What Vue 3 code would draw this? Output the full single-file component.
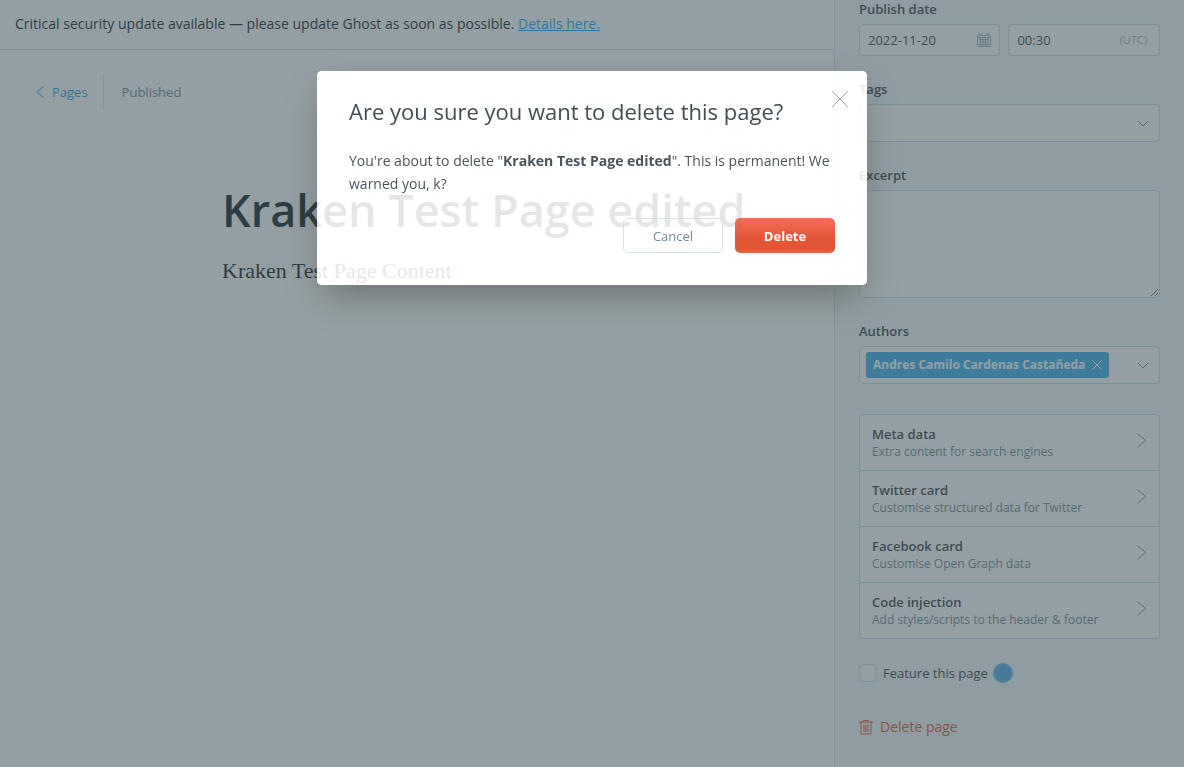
<script setup>
import { ref } from 'vue'

const publishDate = ref('2022-11-20')
const publishTime = ref('00:30')
const excerpt = ref('')
const featured = ref(false)
const sections = [
  { title: 'Meta data', text: 'Extra content for search engines' },
  { title: 'Twitter card', text: 'Customise structured data for Twitter' },
  { title: 'Facebook card', text: 'Customise Open Graph data' },
  { title: 'Code injection', text: 'Add styles/scripts to the header & footer' }
]
</script>

<template>
  <div class="app">
    <main class="editor">
      <div class="alert">
        Critical security update available — please update Ghost as soon as possible.
        <a href="#">Details here.</a>
      </div>
      <header class="bar">
        <a href="#" class="back">
          <svg width="8" height="12" viewBox="0 0 8 12"><path d="M7.5.5 1 6l6.5 5.500" /></svg>
          Pages
        </a>
        <span class="status">Published</span>
      </header>
      <article class="post">
        <h1>Kraken Test Page edited</h1>
        <p>Kraken Test Page Content</p>
      </article>
    </main>

    <aside class="settings">
      <div class="group">
        <label class="label" for="date">Publish date</label>
        <div class="dates">
          <div class="field">
            <input id="date" v-model="publishDate" type="text" />
            <svg class="calendar" width="14" height="14" viewBox="0 0 14 14">
              <path d="M.5 2.500h13v11H.5zM.5 4.500h13M2 6.500h10M2 9h10M2 11.500h10M3.500 5v8M6 5v8M8.500 5v8M11 5v8" />
              <circle cx="3.500" cy="1.500" r="1" />
              <circle cx="10.500" cy="1.500" r="1" />
            </svg>
          </div>
          <div class="field">
            <input v-model="publishTime" type="text" aria-label="Publish time" />
            <span class="zone">(UTC)</span>
          </div>
        </div>
      </div>

      <div class="group">
        <label class="label" for="tags">Tags</label>
        <div class="field tall">
          <input id="tags" type="text" />
          <svg class="chevron" width="12" height="7" viewBox="0 0 12 7"><path d="M1 1l5 5 5-5" /></svg>
        </div>
      </div>

      <div class="group">
        <label class="label" for="excerpt">Excerpt</label>
        <textarea id="excerpt" v-model="excerpt"></textarea>
      </div>

      <div class="group">
        <label class="label" for="authors">Authors</label>
        <div class="field tall">
          <span class="token">
            Andres Camilo Cardenas Castañeda
            <button type="button" aria-label="Remove author">
              <svg width="10" height="10" viewBox="0 0 10 10"><path d="M.5.5l9 9M9.500.5l-9 9" /></svg>
            </button>
          </span>
          <input id="authors" type="text" />
          <svg class="chevron" width="12" height="7" viewBox="0 0 12 7"><path d="M1 1l5 5 5-5" /></svg>
        </div>
      </div>

      <ul class="sections">
        <li v-for="s in sections" :key="s.title">
          <button type="button">
            <span>
              <b>{{ s.title }}</b>
              <small>{{ s.text }}</small>
            </span>
            <svg width="9" height="15" viewBox="0 0 9 15"><path d="M.5.5l8 7-8 7" /></svg>
          </button>
        </li>
      </ul>

      <label class="feature">
        <input v-model="featured" type="checkbox" />
        Feature this page
        <i class="beacon"></i>
      </label>

      <button type="button" class="remove">
        <svg width="14" height="15" viewBox="0 0 14 15">
          <path d="M0 2h14M4.500 2V.5h5V2M2 2v12h10V2M5 4.500v7.500M7 4.500v7.500M9 4.500v7.500" />
        </svg>
        Delete page
      </button>
    </aside>

    <div class="layer">
      <section class="modal" role="dialog" aria-labelledby="modal-title">
        <button type="button" class="close" aria-label="Close">
          <svg width="16" height="16" viewBox="0 0 16 16"><path d="M0 0l16 16M16 0L0 16" /></svg>
        </button>
        <h2 id="modal-title">Are you sure you want to delete this page?</h2>
        <p>
          You're about to delete "<strong>Kraken Test Page edited</strong>". This is permanent! We warned you, k?
        </p>
        <footer>
          <button type="button" class="btn">Cancel</button>
          <button type="button" class="btn danger">Delete</button>
        </footer>
      </section>
    </div>
  </div>
</template>

<style>
body {
  margin: 0;
}
</style>

<style scoped>
* {
  box-sizing: border-box;
}
.app {
  display: grid;
  grid-template-columns: 1fr 350px;
  min-height: 100vh;
  overflow: hidden;
  background: #fff;
  color: #394047;
  font: 13px/20px "Segoe UI", "Open Sans", "Noto Sans", sans-serif;
}
button,
input,
textarea {
  font: inherit;
  color: inherit;
}
button {
  padding: 0;
  border: 0;
  background: none;
}
svg {
  display: block;
  flex: none;
  fill: none;
  stroke: currentColor;
}
a {
  color: #26a0e8;
}
.alert {
  height: 50px;
  padding: 14px 15px;
  border-bottom: 1px solid #d0dee5;
  color: #15212a;
  font-size: 14px;
}
.bar {
  display: flex;
  align-items: center;
  height: 36px;
  margin: 24px 36px;
}
.back {
  display: flex;
  align-items: center;
  gap: 8px;
  height: 36px;
  padding-right: 15px;
  border-right: 1px solid #d8e6ee;
  text-decoration: none;
}
.status {
  padding-left: 18px;
  color: #738a94;
}
.post {
  padding-left: 222px;
  color: #15212a;
}
.post h1 {
  margin: 0;
  padding-top: 46px;
  font-size: 45px;
  line-height: 60px;
  font-weight: 600;
  white-space: nowrap;
}
.post p {
  margin: 0;
  padding-top: 16px;
  font: 22px/30px Georgia, "Liberation Serif", serif;
}
.settings {
  min-width: 0;
  padding: 0 24px;
  border-left: 1px solid #d8e6ee;
  background: #f4f8fb;
}
.group {
  margin-bottom: 24px;
}
.label {
  display: block;
  margin-bottom: 6px;
  line-height: 18px;
  font-weight: 600;
}
.dates {
  display: grid;
  grid-template-columns: minmax(0, 14fr) minmax(0, 15fr);
  gap: 8px;
}
.field {
  display: flex;
  align-items: center;
  height: 32px;
  padding: 0 8px;
  border: 1px solid #c8dce5;
  border-radius: 4px;
  background: #fff;
}
.field input {
  flex: 1;
  width: 0;
  min-width: 0;
  padding: 0;
  border: 0;
  outline: 0;
  background: none;
}
.tall {
  height: 38px;
  padding: 0 10px 0 6px;
}
.calendar {
  color: #a8b8c0;
}
.zone {
  padding-right: 4px;
  color: #a4b4bc;
  font-size: 11px;
}
.chevron {
  color: #738a94;
}
textarea {
  display: block;
  width: 100%;
  height: 108px;
  border: 1px solid #c8dce5;
  border-radius: 4px;
  background: #fff;
  resize: vertical;
}
.token {
  display: flex;
  align-items: center;
  gap: 7px;
  height: 26px;
  padding: 0 7px;
  border-radius: 3px;
  background: #3eb0ef;
  color: #fff;
  font-size: 12px;
  font-weight: 700;
  white-space: nowrap;
}
.sections {
  margin: 30px 0 23px;
  padding: 0;
  overflow: hidden;
  border: 1px solid #c8dce5;
  border-radius: 4px;
  background: #fff;
  list-style: none;
}
.sections li + li {
  border-top: 1px solid #c8dce5;
}
.sections button {
  display: flex;
  align-items: center;
  justify-content: space-between;
  width: 100%;
  height: 55px;
  padding: 0 13px 0 12px;
  text-align: left;
}
.sections b {
  display: block;
  line-height: 18px;
  font-weight: 600;
}
.sections small {
  display: block;
  color: #738a94;
  font-size: 12px;
  line-height: 18px;
}
.sections svg {
  margin-bottom: 4px;
  color: #738a94;
}
.feature {
  display: flex;
  align-items: center;
  gap: 5px;
  height: 22px;
}
.feature input {
  appearance: none;
  width: 18px;
  height: 18px;
  margin: 0 1px 0 0;
  border: 1px solid #c8dce5;
  border-radius: 4px;
  background: #fafcfd;
}
.beacon {
  width: 20px;
  height: 20px;
  border: 2px solid #66b8ee;
  border-radius: 50%;
  background: #50aeec;
}
.remove {
  display: flex;
  align-items: center;
  gap: 7px;
  margin-top: 33px;
  color: #f05230;
  font-size: 14px;
}
.layer {
  position: fixed;
  inset: 0;
  display: flex;
  align-items: flex-start;
  justify-content: center;
  padding-top: 71px;
}
/* The spread shadow dims everything around the dialog. */
.modal {
  position: relative;
  width: 550px;
  padding: 24px 32px 32px;
  border-radius: 5px;
  background: rgba(255, 255, 255, 0.89);
  box-shadow:
    0 16px 36px -8px rgba(40, 40, 30, 0.4),
    0 0 0 200vmax rgba(64, 83, 91, 0.56);
}
.modal h2 {
  margin: 0 0 22px;
  color: #434d52;
  font-size: 22px;
  line-height: 32px;
  font-weight: 500;
}
.modal p {
  margin: 0 0 23px;
  color: #4a5459;
  font-size: 14px;
  line-height: 23px;
}
.modal footer {
  display: flex;
  justify-content: flex-end;
  gap: 12px;
}
.close {
  position: absolute;
  top: 20px;
  right: 19px;
  color: #a0a4a6;
}
.btn {
  width: 100px;
  height: 35px;
  border: 1px solid #d6e2ea;
  border-radius: 5px;
  color: #738a94;
}
.danger {
  border: 0;
  background: linear-gradient(
    rgba(242, 96, 69, 0.9),
    rgba(223, 66, 31, 0.9) 60%,
    rgba(223, 66, 31, 0.9) 90%,
    rgba(232, 84, 50, 0.9)
  );
  color: #fff;
  font-weight: 700;
}
</style>
